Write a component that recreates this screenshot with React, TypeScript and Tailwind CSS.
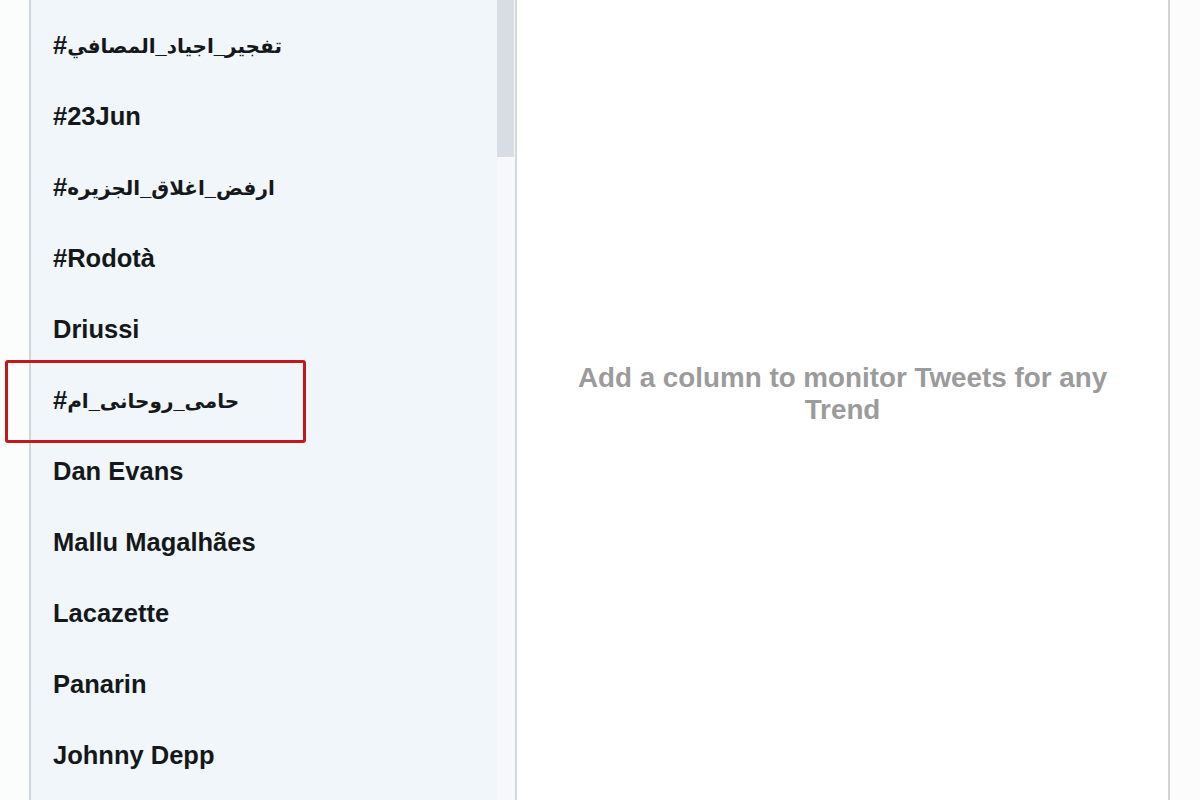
const trends = [
  { text: 'تفجير_اجياد_المصافي', rtl: true },
  { text: '#23Jun' },
  { text: 'ارفض_اغلاق_الجزيره', rtl: true },
  { text: '#Rodotà' },
  { text: 'Driussi' },
  { text: 'حامی_روحانی_ام', rtl: true },
  { text: 'Dan Evans' },
  { text: 'Mallu Magalhães' },
  { text: 'Lacazette' },
  { text: 'Panarin' },
  { text: 'Johnny Depp' },
]

export default function App() {
  return (
    <div className="relative flex h-[800px] w-[1200px] overflow-hidden bg-white font-['Liberation_Sans','DejaVu_Sans',sans-serif]">
      {/* left gutter */}
      <div className="w-[29px] shrink-0 bg-[#fbfcfc]" />

      {/* trends list */}
      <div className="flex w-[488px] shrink-0 border-l-2 border-[#cfd4d8]">
        <div className="flex-1 bg-[#f0f6fa] pt-[10px] pl-[22px]">
          {trends.map((t) =>
            t.rtl ? (
              <div key={t.text} className="flex h-[71px] items-center font-bold text-[#15181b]">
                <span className="text-[25.5px]">#</span>
                <span className="text-[20px]">{t.text}</span>
              </div>
            ) : (
              <div key={t.text} className="flex h-[71px] items-center text-[25.5px] font-bold text-[#15181b]">
                {t.text}
              </div>
            ),
          )}
        </div>
        {/* scrollbar */}
        <div className="flex w-[20px] flex-col border-r-2 border-[#d3d8dc] bg-[#f6f8f9]">
          <div className="h-[157px] w-[17px] bg-[#d7dde2]" />
        </div>
      </div>

      {/* main column */}
      <div className="flex w-[653px] shrink-0 items-center justify-center border-r-2 border-[#d2d2d2] bg-white px-[40px] pb-[12px]">
        <p className="text-center text-[27.8px] font-bold leading-[32px] text-[#9b9b9b]">
          Add a column to monitor Tweets for any Trend
        </p>
      </div>

      <div className="flex-1 bg-[#fcfcfc]" />

      {/* highlight box */}
      <div className="absolute left-[5px] top-[360px] h-[83px] w-[301px] rounded-[3px] border-[3px] border-[#c4171c]" />
    </div>
  )
}
